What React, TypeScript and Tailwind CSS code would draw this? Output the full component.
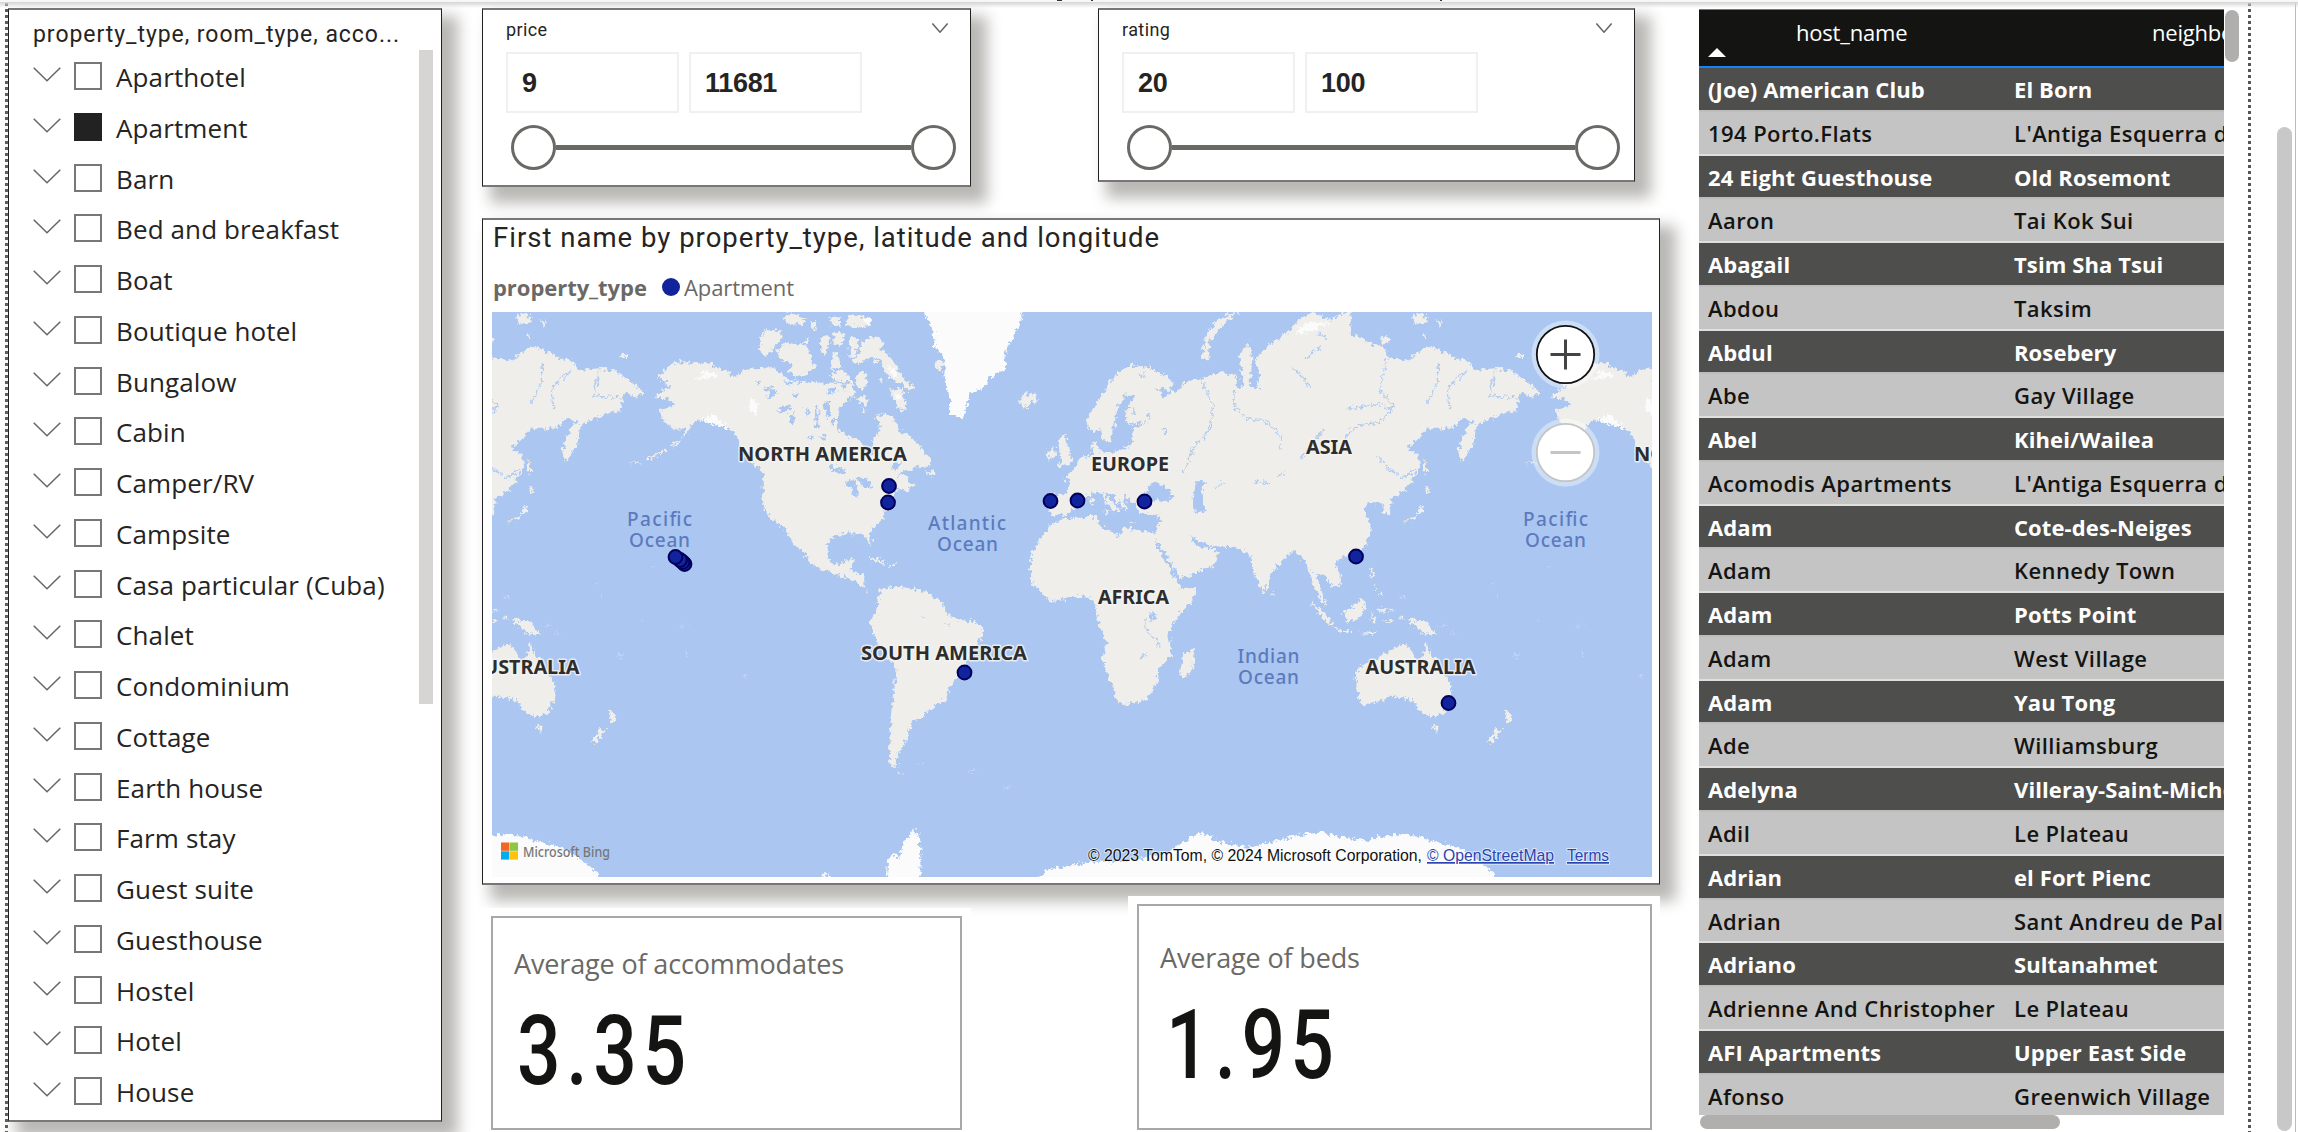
import React from "react";

const propertyTypes = [
  "Aparthotel", "Apartment", "Barn", "Bed and breakfast", "Boat", "Boutique hotel", "Bungalow",
  "Cabin", "Camper/RV", "Campsite", "Casa particular (Cuba)", "Chalet", "Condominium", "Cottage",
  "Earth house", "Farm stay", "Guest suite", "Guesthouse", "Hostel", "Hotel", "House",
];

const hosts: [string, string][] = [
  ["(Joe) American Club", "El Born"],
  ["194 Porto.Flats", "L'Antiga Esquerra de l'Eixample"],
  ["24 Eight Guesthouse", "Old Rosemont"],
  ["Aaron", "Tai Kok Sui"],
  ["Abagail", "Tsim Sha Tsui"],
  ["Abdou", "Taksim"],
  ["Abdul", "Rosebery"],
  ["Abe", "Gay Village"],
  ["Abel", "Kihei/Wailea"],
  ["Acomodis Apartments", "L'Antiga Esquerra de l'Eixample"],
  ["Adam", "Cote-des-Neiges"],
  ["Adam", "Kennedy Town"],
  ["Adam", "Potts Point"],
  ["Adam", "West Village"],
  ["Adam", "Yau Tong"],
  ["Ade", "Williamsburg"],
  ["Adelyna", "Villeray-Saint-Michel"],
  ["Adil", "Le Plateau"],
  ["Adrian", "el Fort Pienc"],
  ["Adrian", "Sant Andreu de Palomar"],
  ["Adriano", "Sultanahmet"],
  ["Adrienne And Christopher", "Le Plateau"],
  ["AFI Apartments", "Upper East Side"],
  ["Afonso", "Greenwich Village"],
];

const panel =
  "bg-white border-x border-y-2 border-x-[#222] border-y-[#777] shadow-[12px_12px_14px_4px_#b9b8b5]";

function Chevron({ className }: { className: string }) {
  return (
    <svg viewBox="0 0 28 15" className={className} fill="none" stroke="#666" preserveAspectRatio="none">
      <path d="M.7.7 14 13.8 27.3.7" strokeWidth="1.5" vectorEffect="non-scaling-stroke" />
    </svg>
  );
}

function DottedRule({ className }: { className: string }) {
  return (
    <div
      className={`w-[3px] h-[1129px] mt-[3px] shrink-0 bg-[repeating-linear-gradient(to_bottom,#555_0_3px,transparent_3px_6px)] ${className}`}
    />
  );
}

function PropertySlicer() {
  return (
    <section className={`${panel} w-[434px] h-[1114px] mt-2 shrink-0 flex`}>
      <div className="flex-1 pl-6 pt-[6px]">
        <h2 className="h-[46px] leading-[38px] font-['Roboto'] text-[23px] tracking-[0.95px] whitespace-nowrap text-[#252423]">
          property_type, room_type, acco...
        </h2>
        <ul>
          {propertyTypes.map((name) => (
            <li key={name} className="h-[50.75px] flex items-start">
              <Chevron className="w-7 h-[15px] mt-[5px]" />
              <span
                className={`ml-[13px] size-7 border-2 ${name === "Apartment" ? "bg-[#222] border-[#222]" : "bg-white border-[#777]"}`}
              />
              <span className="ml-[14px] mt-px leading-7 text-[26px] tracking-[0.12px] text-[#252423] whitespace-nowrap">
                {name}
              </span>
            </li>
          ))}
        </ul>
      </div>
      <div className="w-[14px] h-[654px] mt-10 mr-2 bg-[#d6d5d3]" />
    </section>
  );
}

function RangeSlicer({ label, low, high, size }: { label: string; low: string; high: string; size: string }) {
  return (
    <section className={`${panel} ${size} flex flex-col pl-[23px]`}>
      <div className="flex justify-between items-start h-[42px] pr-[22px] pt-[7px]">
        <span className="font-['Roboto'] text-[18px] leading-[26px] tracking-[0.4px] text-[#252423]">{label}</span>
        <Chevron className="w-4 h-[10px] mt-[6px]" />
      </div>
      <div className="flex gap-[10px]">
        {[low, high].map((v) => (
          <div
            key={v}
            className="w-[173px] h-[61px] border-2 border-[#f0f0f0] pl-[14px] leading-[58px] font-['Liberation_Sans'] font-bold text-[27px] tracking-[-0.3px] text-[#252423]"
          >
            {v}
          </div>
        ))}
      </div>
      <div className="flex items-center mt-3 ml-[5px] mr-[14px]">
        <span className="size-[45px] rounded-full border-[3px] border-[#6b6966] bg-white" />
        <span className="flex-1 h-[5px] bg-[#6b6966]" />
        <span className="size-[45px] rounded-full border-[3px] border-[#6b6966] bg-white" />
      </div>
    </section>
  );
}

function World() {
  return (
    <g>
      <g transform="translate(480 300) scale(.33333 .3699)" fill="#efeeea" filter="url(#coast)">
        <path d="M530 208 545 200 565 180 600 165 640 172 680 170 720 185 770 208 790 190 820 185 870 182 900 195 920 215 960 222 1000 218 1040 225 1080 215 1100 200 1120 225 1125 250 1105 270 1080 290 1070 320 1075 350 1100 368 1140 378 1155 400 1165 425 1182 410 1180 375 1200 350 1190 310 1225 310 1250 330 1255 355 1285 365 1310 385 1330 410 1350 425 1350 450 1310 452 1270 462 1250 480 1280 470 1285 490 1310 500 1280 515 1250 510 1235 535 1215 560 1210 590 1170 625 1172 668 1155 640 1140 630 1100 632 1060 640 1045 660 1042 695 1060 715 1090 712 1100 703 1118 700 1115 738 1150 742 1150 765 1165 790 1140 770 1110 755 1070 740 1020 725 990 710 980 690 940 660 910 615 870 590 850 560 848 500 850 470 830 450 800 425 780 395 765 360 740 340 700 322 665 320 635 335 610 375 615 350 590 350 570 345 545 318 540 300 580 285 575 270 530 265 530 250 570 240 560 225Z" />
        <path d="M1185 380 1200 395 1180 400ZM1335 465 1360 460 1360 478Z" />
        <path d="M1200 785 1225 778 1250 775 1300 780 1340 790 1385 815 1400 850 1440 865 1485 870 1510 890 1505 910 1485 940 1460 975 1445 1010 1410 1040 1400 1080 1375 1092 1345 1110 1320 1130 1300 1140 1285 1165 1275 1200 1260 1215 1250 1240 1252 1262 1232 1262 1228 1200 1235 1100 1245 1040 1250 1000 1225 970 1195 930 1175 890 1172 870 1185 850 1195 815ZM1252 1268 1270 1285 1255 1282Z" />
        <path d="M1170 694 1215 705 1210 714 1175 705ZM1225 712 1255 716 1225 722Z" />
        <path d="M440 440 480 436 478 440ZM500 428 560 402 562 406 504 432ZM575 392 600 378 602 384 580 396ZM420 150 440 146 440 156 424 158Z" />
        <g fill="#fafbfa">
          <path d="M1325 20 1360 80 1365 130 1390 150 1395 220 1410 270 1410 310 1445 320 1460 290 1470 250 1510 240 1530 210 1580 185 1570 150 1600 100 1625 50 1620 20Z" />
          <path d="M0 1452 90 1445 160 1460 250 1480 330 1530 370 1570 0 1570ZM1220 1570 1225 1510 1245 1495 1260 1510 1270 1470 1300 1430 1320 1450 1322 1570ZM1000 1570 1035 1552 1070 1570Z" />
          <path d="M640 215 680 192 715 200 690 212ZM805 265 830 275 830 310 810 305ZM660 325 700 310 760 355 740 345Z" />
        </g>
        <g fill="#c2d6f3">
          <path d="M345 765h10v5h-10zM360 798h6v6h-6zM485 865h12v4h-12zM600 880h22v3h-22zM410 960l20-5v5l-18 8zM615 950h8v12h-8zM790 1015h15v4h-15zM510 720h12v4h-12zM72 800h12v5h-12zM190 880h28v4h-28zM225 898h14v4h-14zM1310 1250h20v4h-20zM1465 1272h20v4h-20zM1570 1316h20v4h-20z" />
        </g>
      </g>
      <g transform="translate(730 310) scale(.33333)" fill="#efeeea" filter="url(#coast)">
        <path d="M90 130 92 85 105 58 145 62 158 78 140 105 110 138ZM140 120 165 95 195 105 225 100 240 130 245 155 260 165 235 190 200 198 175 185 185 165 150 150ZM230 80l12 10-6 14-10-8ZM270 80 295 75 300 100 285 132 270 120ZM310 70 342 66 345 90 325 108 310 98ZM308 125 325 130 332 170 305 180ZM360 85 385 80 380 120 372 145 358 140ZM395 95 420 80 445 85 462 100 450 120 470 130 500 165 520 205 560 235 535 240 510 215 480 205 460 180 455 150 420 140 385 165 365 155 390 130ZM380 190 408 185 412 225 395 240 378 225ZM375 260 405 258 415 285 390 280ZM480 240 515 235 530 290 515 310 495 275ZM430 150l15 5v10l-12-4ZM445 205l20 5-10 8ZM155 22 190 12 228 30 220 45 180 42ZM245 30 262 40 255 60 240 52ZM298 20 330 20 330 50 305 45ZM345 30 365 15 425 25 422 48 395 52 350 48ZM300 195 330 182 350 190 355 215 310 215ZM435 312l10 5-8 6ZM395 295l12 4-8 8ZM615 155l25-5-5 30-15-4Z" />
        <path fill="#fafbfa" d="M470 165 495 175 505 205 485 195ZM395 25 425 28 415 45ZM495 250 515 262 500 270Z" />
        <g fill="#abc7f1">
          <path d="M100 235 125 232 145 245 125 265 105 262 120 250ZM145 290 185 285 175 305 150 310ZM185 245 205 250 195 270ZM255 290 265 290 265 360 258 360ZM280 280 300 275 300 320 288 320ZM265 380 290 375 285 395ZM290 465 345 475 350 495 310 485ZM345 515 375 510 385 560 370 560 365 525 345 530ZM380 500 415 510 430 535 400 530ZM290 240 315 235 320 245 295 252ZM180 315 195 312 192 345 182 345ZM225 290 238 300 230 318ZM300 330 318 330 310 350ZM75 215 90 212 88 226ZM230 380 245 376 250 395ZM485 465 510 455 505 475 490 480Z" />
          <path d="M160 215 230 205 370 215 362 222 230 214 170 222ZM335 225 350 222 345 245Z" />
        </g>
      </g>
      <g transform="translate(900 300) scale(.33333 .3699)" fill="#efeeea" filter="url(#coast)">
        <path d="M455 525 500 528 508 490 490 480 520 460 540 430 580 415 577 390 590 388 600 412 650 410 690 395 700 355 680 330 675 300 705 260 675 258 650 300 640 350 630 385 612 382 605 350 570 355 560 330 575 300 610 250 650 200 690 178 740 180 790 200 820 225 810 245 770 235 790 265 840 240 860 215 900 215 960 195 1010 205 1010 240 1030 230 1018 150 1045 110 1057 160 1050 235 1072 240 1080 200 1065 160 1090 140 1120 110 1160 90 1200 50 1240 32 1290 55 1355 25 1350 90 1420 120 1450 125 1465 155 1520 165 1580 125 1620 135 1660 155 1705 165 1720 190 1780 185 1830 190 1870 215 1920 245 1900 265 1860 245 1850 300 1810 305 1770 320 1730 340 1720 390 1685 440 1675 410 1685 370 1720 325 1680 322 1660 345 1580 350 1550 380 1520 400 1555 420 1560 450 1530 500 1500 520 1472 540 1470 585 1450 575 1450 550 1400 550 1395 575 1415 620 1400 660 1370 690 1340 695 1305 705 1320 740 1325 770 1295 775 1270 740 1245 735 1262 780 1285 830 1260 810 1240 770 1230 735 1210 700 1185 675 1140 710 1110 740 1100 785 1088 790 1065 740 1050 690 1020 670 930 665 895 650 870 635 880 655 900 670 930 668 955 685 940 720 840 755 800 690 760 640 775 610 785 580 770 585 720 575 700 548 672 525 680 572 655 550 640 530 605 518 660 565 640 575 625 550 590 515 560 530 530 560 500 580 455 582 442 560Z" />
        <path d="M450 608 500 590 590 585 600 610 660 640 670 615 760 630 770 665 830 760 845 782 890 778 880 810 830 860 805 900 815 960 770 1000 775 1030 740 1080 700 1090 655 1092 640 1050 605 970 620 930 590 860 585 820 560 800 520 805 450 815 395 765 390 700 410 660Z" />
        <path d="M885 940 880 990 860 1020 840 1010 850 960ZM480 365 495 360 500 385 515 430 510 445 470 450 485 430 475 400ZM442 410 465 395 468 425 445 432ZM355 268 380 252 410 258 405 275 380 290 358 282ZM905 160 915 100 950 55 1020 25 960 75 925 115 930 160ZM1115 780 1122 795 1115 802ZM605 568 632 572 625 580ZM570 535 580 540 576 560ZM690 600 705 600 700 606ZM1535 40 1560 38 1585 48 1580 60 1545 66ZM1610 55 1632 62 1620 70ZM1565 95 1580 92 1578 105ZM1440 100 1460 95 1470 115 1450 120Z" />
        <g fill="#fafbfa">
          <path d="M410 1570 440 1540 560 1520 700 1515 800 1495 880 1450 910 1440 960 1465 1050 1480 1160 1455 1230 1440 1260 1437 1340 1455 1410 1460 1460 1450 1500 1445 1560 1455 1620 1480 1700 1530 1790 1570Z" />
          <path d="M1180 95 1220 60 1290 62 1230 85Z" />
        </g>
        <g fill="#abc7f1">
          <path d="M735 520 760 492 785 500 825 530 795 545 740 542ZM888 490 915 490 905 530 915 570 885 575 880 540Z" />
          <path d="M680 335 740 330 715 340 700 352Z" />
          <path d="M750 845 768 850 755 870ZM735 320 745 300 752 320ZM790 350 805 355 798 365ZM700 290 708 305 700 310ZM720 205 735 200 730 215Z" />
        </g>
      </g>
      <g transform="translate(1260 300) scale(.33333 .3699)" fill="#efeeea" filter="url(#coast)">
        <path d="M285 1010 300 990 350 970 400 945 430 930 450 940 465 970 485 972 500 925 515 960 545 1000 575 1040 570 1080 550 1120 510 1125 480 1110 450 1080 400 1070 360 1085 300 1095ZM515 1150 540 1152 530 1170Z" />
        <path d="M680 1190 715 1155 727 1162 695 1200ZM735 1105 758 1130 742 1145ZM440 860 500 870 530 905 490 900 460 880ZM248 845 280 830 305 805 315 825 300 860 265 870ZM150 815 190 840 222 880 205 880ZM225 886 275 895 275 899 228 893ZM330 725 345 740 335 750ZM345 765 350 785 345 788ZM360 785 372 800 360 800ZM485 550 490 570 460 595 430 600 470 580ZM495 505 515 520 498 525ZM490 430 505 460 492 470ZM335 840 350 870 335 875ZM350 835 400 838 400 842 350 842ZM300 900 350 896 340 904ZM355 865 405 866 400 872ZM415 855 435 858 430 866Z" />
      </g>
      <g transform="translate(900 300) scale(.33333 .3699)" fill="none" stroke="#b3cbee" strokeWidth="4" filter="url(#coast)">
        <path d="M1000 245 1005 290 1040 320 1100 330 1145 370 1140 400M905 220 940 290 930 350 880 400 850 470M1460 160 1440 240 1480 290 1440 330 1370 340 1330 380M1340 295 1380 290 1440 280 1480 300M1615 170 1615 220 1580 280M1700 190 1640 240 1650 290M1785 190 1770 260 1850 265M1430 420 1470 460 1510 480 1550 460M1270 350 1230 400 1200 430M1060 490 1110 495M1130 480 1150 465M950 510 970 490M735 860 740 900 765 915M770 910 775 940M720 970 740 955M1170 180 1200 200 1230 240M60 855 75 860M130 870 150 880M1215 160 1260 130M1255 90 1280 105" />
      </g>
    </g>
  );
}

function ContinentLabels({ items }: { items: [string, number, number, number][] }) {
  return (
    <g fontFamily="'Noto Sans', sans-serif" fontWeight="700" fontSize="20" fill="#2d2d2d" stroke="#f6f5f2" strokeWidth="3" strokeOpacity=".8" paintOrder="stroke" strokeLinejoin="round">
      {items.map(([t, x, y, w]) => (
        <text key={t + x} x={x} y={y} textLength={w} lengthAdjust="spacingAndGlyphs">{t}</text>
      ))}
    </g>
  );
}

const pins = [
  [889, 486], [888, 502.5], [684.5, 564], [682.5, 562], [680, 560], [675.5, 557], [964.5, 672.5],
  [1050.5, 501], [1077.5, 500.5], [1144.5, 501.5], [1356, 556.5], [1448.5, 703],
];

function WorldMap() {
  return (
    <svg viewBox="492 312 1160 565" className="w-[1160px] h-[565px] block">
      <defs>
        <filter id="coast" x="-5%" y="-5%" width="110%" height="110%" colorInterpolationFilters="sRGB">
          <feTurbulence type="fractalNoise" baseFrequency=".09" numOctaves="3" seed="4" result="n" />
          <feDisplacementMap in="SourceGraphic" in2="n" scale="26" xChannelSelector="R" yChannelSelector="G" />
          <feGaussianBlur stdDeviation="1.2" />
        </filter>
      </defs>
      <rect x="492" y="312" width="1160" height="565" fill="#abc7f1" />
      <World />
      <g transform="translate(-896 0)"><World /></g>
      <g transform="translate(896 0)"><World /></g>
      <ContinentLabels
        items={[
          ["NORTH AMERICA", 738, 460.5, 169], ["SOUTH AMERICA", 861, 660, 166], ["EUROPE", 1091, 471, 78],
          ["AFRICA", 1098, 604, 71], ["ASIA", 1306, 454, 46], ["AUSTRALIA", 1365.5, 674, 110],
          ["AUSTRALIA", 469.5, 674, 110], ["NORTH AMERICA", 1634, 460.5, 169],
        ]}
      />
      <g fontFamily="'Noto Sans', sans-serif" fontWeight="500" fontSize="19" fill="#5c7abd">
        {([
          ["Pacific", 627, 525.5, 65], ["Ocean", 629, 547, 61], ["Atlantic", 928, 529.5, 78], ["Ocean", 937, 551, 61],
          ["Indian", 1237.5, 662.5, 62], ["Ocean", 1238, 683.5, 61], ["Pacific", 1523, 525.5, 65], ["Ocean", 1525, 547, 61],
        ] as [string, number, number, number][]).map(([t, x, y, w]) => (
          <text key={t + x} x={x} y={y} textLength={w}>{t}</text>
        ))}
      </g>
      {pins.map(([x, y]) => (
        <circle key={`${x}-${y}`} cx={x} cy={y} r="6.9" fill="#12239e" stroke="#00005c" strokeWidth="2" />
      ))}
      <circle cx="1565.5" cy="354.5" r="34" fill="#fff" fillOpacity=".4" />
      <circle cx="1565.5" cy="354.5" r="28.7" fill="#fff" stroke="#111" strokeWidth="1.8" />
      <path d="M1550.5 354.5h30M1565.5 339.5v30" stroke="#444" strokeWidth="3" />
      <circle cx="1565.5" cy="452.5" r="34" fill="#fff" fillOpacity=".4" />
      <circle cx="1565.5" cy="452.5" r="28.7" fill="#fff" stroke="#c4c4c4" strokeWidth="1.8" />
      <path d="M1550.5 452.5h30" stroke="#c4c4c4" strokeWidth="3" />
      <path d="M501 842.5h8.3v8.3h-8.3z" fill="#f26522" />
      <path d="M509.7 842.5h8.3v8.3h-8.3z" fill="#8dc63f" />
      <path d="M501 851.3h8.3v8.3h-8.3z" fill="#00aeef" />
      <path d="M509.7 851.3h8.3v8.3h-8.3z" fill="#ffc20e" />
      <text x="523" y="856.5" fontFamily="'Noto Sans', sans-serif" fontWeight="500" fontSize="14" fill="#777" textLength="87" lengthAdjust="spacingAndGlyphs">
        Microsoft Bing
      </text>
      <g fontFamily="'Liberation Sans', sans-serif" fontSize="17" fill="#111" stroke="#fff" strokeWidth="2" strokeOpacity=".6" paintOrder="stroke">
        <text x="1088" y="861" textLength="334" lengthAdjust="spacingAndGlyphs">© 2023 TomTom, © 2024 Microsoft Corporation,</text>
        <text x="1427" y="861" fill="#2b45b0" textLength="127" lengthAdjust="spacingAndGlyphs" textDecoration="underline">© OpenStreetMap</text>
        <text x="1567" y="861" fill="#2b45b0" textLength="42" lengthAdjust="spacingAndGlyphs" textDecoration="underline">Terms</text>
      </g>
    </svg>
  );
}

function MapPanel() {
  return (
    <section className={`${panel} absolute left-0 top-[210px] w-[1178px] h-[667px] pl-[9px]`}>
      <h2 className="h-[42px] pl-px leading-[36px] font-['Roboto'] text-[27.5px] tracking-[1.01px] text-[#252423]">
        First name by property_type, latitude and longitude
      </h2>
      <div className="h-[50px] flex items-center pl-px text-[22px] leading-8 text-[#6b6966]">
        <b className="tracking-[-0.05px]">property_type</b>
        <span className="size-[18px] rounded-full bg-[#12239e] ml-[15px] mr-1" />
        <span className="tracking-[-0.05px]">Apartment</span>
      </div>
      <WorldMap />
    </section>
  );
}

type CardProps = { label: string; value: string; outer: string; inner: string; top: string; number: string };

function Card({ label, value, outer, inner, top, number }: CardProps) {
  return (
    <div className={`bg-white ${outer}`}>
      <section className={`border-2 border-[#aaa8a4] pl-[21px] ${inner}`}>
        <p className={`text-[27px] leading-9 tracking-[-0.15px] text-[#6b6966] whitespace-nowrap ${top}`}>{label}</p>
        <p className={`font-['Roboto'] font-medium text-[96px] leading-[100px] mt-[19px] text-[#141412] origin-left scale-x-[.8] ${number}`}>
          {value}
        </p>
      </section>
    </div>
  );
}

function HostTable() {
  return (
    <section className="ml-[39px] mt-[9px] w-[541px] shrink-0">
      <div className="flex">
        <div className="w-[525px] h-[1106px] overflow-hidden">
          <div className="h-[59px] bg-[#141412] border-t border-t-[#777] border-b-2 border-b-[#1683f7] text-white text-[22px] leading-[45px] tracking-[-0.2px] flex relative">
            <span className="w-[306px] shrink-0 pl-[97px]">host_name</span>
            <span className="pl-[147px]">neighborhood</span>
            <svg viewBox="0 0 18 9" className="absolute left-[9px] top-[38px] w-[18px] h-[9px]">
              <path d="M0 9 9 0l9 9z" fill="#fff" />
            </svg>
          </div>
          {hosts.map(([host, area], i) => (
            <div
              key={i}
              className={`h-[43.77px] border-b-2 flex pl-[9px] whitespace-nowrap text-[22px] leading-[43px] ${
                i % 2 ? "bg-[#c4c4c4] border-[#dfdfdf] text-[#141412] font-semibold tracking-[0.42px]" : "bg-[#4e4e4c] border-[#bdbdbd] text-white font-bold tracking-[0.1px]"
              }`}
            >
              <span className="w-[306px] shrink-0">{host}</span>
              <span>{area}</span>
            </div>
          ))}
        </div>
        <div className="ml-px mt-px w-[14px] h-[52px] rounded-full bg-[#b0afad]" />
      </div>
      <div className="ml-px w-[360px] h-[14px] rounded-full bg-[#b0afad]" />
    </section>
  );
}

export default function App() {
  return (
    <div className="relative w-[2298px] h-[1132px] overflow-hidden bg-white font-['Open_Sans','Noto_Sans',sans-serif]">
      <div className="absolute inset-x-0 top-0 h-2 bg-[linear-gradient(#f7f7f7_0_2px,#d4d4d4_2px,#ffffff00_8px)]">
        <i className="absolute left-[1057px] top-0 w-[5px] h-px bg-[#333]" />
        <i className="absolute left-[1091px] top-0 w-0.5 h-px bg-[#333]" />
        <i className="absolute left-[1440px] top-0 w-0.5 h-px bg-[#333]" />
      </div>
      <main className="flex h-full">
        <DottedRule className="ml-[5px]" />
        <PropertySlicer />
        <div className="relative ml-[40px] mt-2 w-[1178px] shrink-0">
          <MapPanel />
          <div className="relative flex items-start justify-between h-[210px] pr-[25px]">
            <RangeSlicer label="price" low="9" high="11681" size="w-[489px] h-[179px]" />
            <RangeSlicer label="rating" low="20" high="100" size="w-[537px] h-[174px]" />
          </div>
          <div className="relative flex justify-between items-start mt-[678px]">
            <Card label="Average of accommodates" value="3.35" outer="w-[489px] pt-2 pl-[9px] mt-3" inner="w-[471px] h-[214px]" top="pt-[28px]" number="ml-[3px] tracking-[7px]" />
            <Card label="Average of beds" value="1.95" outer="w-[532px] pt-2 pl-[9px]" inner="w-[515px] h-[226px]" top="pt-[34px]" number="ml-[6px] tracking-[6.5px]" />
          </div>
        </div>
        <HostTable />
        <DottedRule className="ml-[8px]" />
        <div className="ml-[26px] mt-[127px] w-[15px] h-[1004px] rounded-full bg-[#c8c8c8]" />
        <div className="ml-[3px] mt-0.5 w-px h-[1130px] bg-[#bbb]" />
      </main>
    </div>
  );
}
